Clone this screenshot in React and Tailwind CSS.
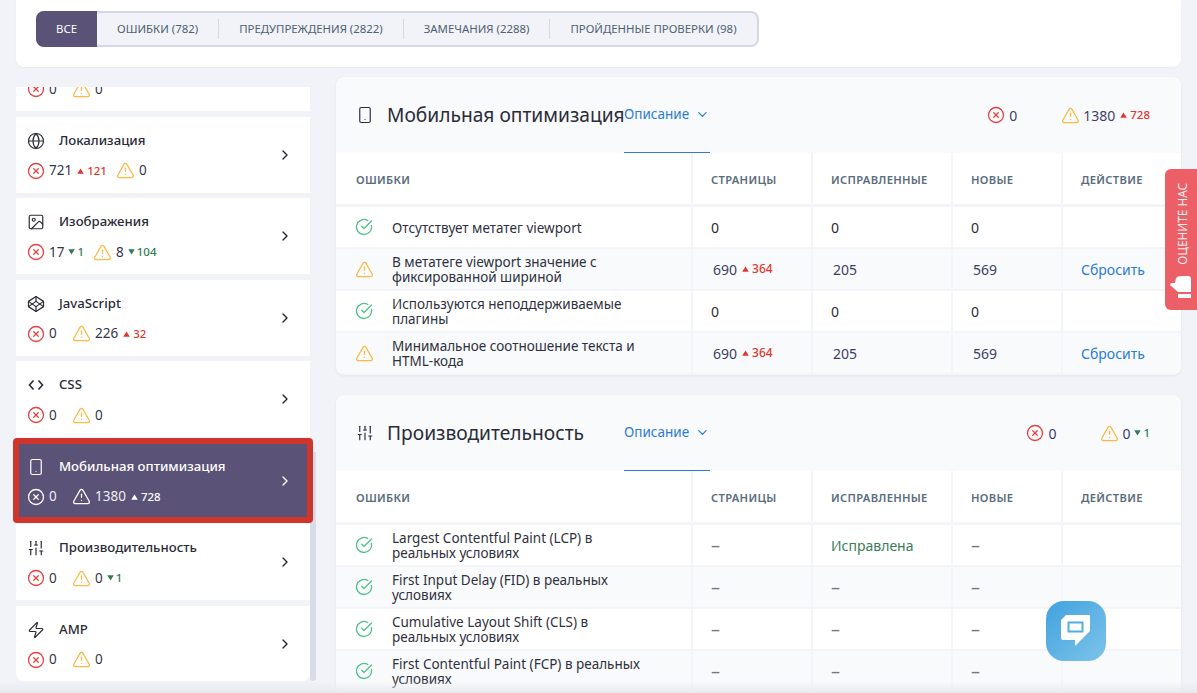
import React from 'react'
import {
  ChevronDown, ChevronRight, CircleCheckBig, CircleX, Codepen, Globe, Image,
  SlidersVertical, Smartphone, TriangleAlert, Zap
} from 'lucide-react'

const tabs = ['Ошибки (782)', 'Предупреждения (2822)', 'Замечания (2288)', 'Пройденные проверки (98)']

function CodeIcon({ className }) {
  return (
    <svg viewBox="0 0 18 18" className={`fill-none stroke-current stroke-[1.6] ${className}`}>
      <path d="M6.5 4.5 2.5 9l4 4.5M11.5 4.5l4 4.5-4 4.5" />
    </svg>
  )
}

const sections = [
  { title: '', icon: Globe, err: '0', warn: '0' },
  { title: 'Локализация', icon: Globe, err: '721', errUp: '121', warn: '0' },
  { title: 'Изображения', icon: Image, err: '17', errDown: '1', warn: '8', warnDown: '104' },
  { title: 'JavaScript', icon: Codepen, err: '0', warn: '226', warnUp: '32' },
  { title: 'CSS', icon: CodeIcon, err: '0', warn: '0' },
  { title: 'Мобильная оптимизация', icon: Smartphone, err: '0', warn: '1380', warnUp: '728', active: true },
  { title: 'Производительность', icon: SlidersVertical, err: '0', warn: '0', warnDown: '1' },
  { title: 'AMP', icon: Zap, err: '0', warn: '0' }
]

const mobileRows = [
  { ok: true, text: 'Отсутствует метатег viewport', pages: '0', fixed: '0', fresh: '0' },
  { text: <>В метатеге viewport значение с<br />фиксированной шириной</>, pages: '690', up: '364', fixed: '205', fresh: '569', reset: true },
  { ok: true, text: <>Используются неподдерживаемые<br />плагины</>, pages: '0', fixed: '0', fresh: '0' },
  { text: <>Минимальное соотношение текста и<br />HTML-кода</>, pages: '690', up: '364', fixed: '205', fresh: '569', reset: true }
]

const perfRows = [
  { ok: true, text: <>Largest Contentful Paint (LCP) в<br />реальных условиях</>, pages: '–', fixed: 'Исправлена', fresh: '–' },
  { ok: true, text: <>First Input Delay (FID) в реальных<br />условиях</>, pages: '–', fixed: '–', fresh: '–' },
  { ok: true, text: <>Cumulative Layout Shift (CLS) в<br />реальных условиях</>, pages: '–', fixed: '–', fresh: '–' },
  { ok: true, text: <>First Contentful Paint (FCP) в реальных<br />условиях</>, pages: '–', fixed: '–', fresh: '–' }
]

function Up({ className = '' }) {
  return (
    <svg viewBox="0 0 8 7" className={`w-[7px] h-[6px] fill-current ${className}`}>
      <path d="M4 0.5 L7.5 6 Q8 6.8 7 6.8 H1 Q0 6.8 .5 6 Z" />
    </svg>
  )
}

function Down({ className = '' }) {
  return (
    <svg viewBox="0 0 8 7" className={`w-[7px] h-[6px] fill-current ${className}`}>
      <path d="M4 6.5 L7.5 1 Q8 .2 7 .2 H1 Q0 .2 .5 1 Z" />
    </svg>
  )
}

function Delta({ up, down, white, big }) {
  const size = big ? 'text-[12px]' : 'text-[11.5px]'
  if (up) {
    return (
      <span className={`ml-[5px] flex items-center gap-[3px] ${size} font-medium ${white ? 'text-white' : 'text-[#e0362c]'}`}>
        <Up />{up}
      </span>
    )
  }
  if (down) {
    return (
      <span className={`ml-[4px] flex items-center gap-[2px] ${size} font-medium text-[#2f7d55]`}>
        <Down />{down}
      </span>
    )
  }
  return null
}

function ErrIcon({ white }) {
  return <CircleX size={18} strokeWidth={1.7} className={`-mx-px shrink-0 ${white ? 'text-white' : 'text-[#e4413f]'}`} />
}

function WarnIcon({ white, className = '' }) {
  return <TriangleAlert size={19} strokeWidth={1.6} className={`shrink-0 ${white ? 'text-white' : 'text-[#fdb943]'} ${className}`} />
}

function SideCard({ item }) {
  const Icon = item.icon
  const white = item.active
  return (
    <div className={`relative h-[76px] shrink-0 pl-3 pr-[17px] flex items-center justify-between ${white ? 'bg-[#5a5277] text-white' : 'bg-white text-[#2a2c38]'}`}>
      <div className="pt-[2px]">
        <div className="flex items-center h-5 mb-[10px]">
          {item.title && <Icon className="w-[18px] h-[18px] -mx-px" size={18} strokeWidth={1.6} />}
          <span className="ml-[15px] text-[13.2px] font-medium">{item.title}</span>
        </div>
        <div className={`flex items-center h-5 text-[13.5px] ${white ? 'text-[#eeedf3]' : 'text-[#34364a]'}`}>
          <div className="flex items-center min-w-[35px]">
            <ErrIcon white={white} />
            <span className="ml-[5px]">{item.err}</span>
            <Delta up={item.errUp} down={item.errDown} white={white} />
          </div>
          <div className="flex items-center ml-[9px]">
            <WarnIcon white={white} />
            <span className="ml-[4px]">{item.warn}</span>
            <Delta up={item.warnUp} down={item.warnDown} white={white} />
          </div>
        </div>
      </div>
      <ChevronRight size={16} strokeWidth={2} className={white ? 'text-white' : 'text-[#23252f]'} />
    </div>
  )
}

function Value({ value }) {
  if (value === '–') return <span className="text-[18px] leading-none text-[#77787f]">–</span>
  return value
}

function Row({ row, odd }) {
  const bg = odd ? 'bg-[#f9fafc]' : 'bg-white'
  const cell = `${bg} flex items-center h-10 text-[14px]`
  const num = row.up ? 'text-[#3d3f66] pl-5' : 'text-[#2a2c38] pl-[18px]'
  return (
    <div className="grid grid-cols-[355px_118px_138px_108px_118px] gap-x-[2px]">
      <div className={`${bg} pl-5 flex items-center h-10`}>
        <span className="w-4 flex justify-center shrink-0">
          {row.ok
            ? <CircleCheckBig size={18} strokeWidth={1.7} className="text-[#51bf88] shrink-0" />
            : <WarnIcon />}
        </span>
        <span className="ml-[20px] pt-[2px] text-[13.5px] leading-[15px] text-[#2f3140]">{row.text}</span>
      </div>
      <div className={`${cell} ${num}`}>
        <Value value={row.pages} />
        {row.up && <Delta up={row.up} big />}
      </div>
      <div className={`${cell} ${row.fixed === 'Исправлена' ? 'text-[#3b7d59] text-[13.5px] pl-[18px]' : num}`}><Value value={row.fixed} /></div>
      <div className={`${cell} ${num}`}><Value value={row.fresh} /></div>
      <div className={`${cell} pl-[18px] text-[#2b7cd3]`}>{row.reset ? 'Сбросить' : ''}</div>
    </div>
  )
}

function Panel({ title, icon: Icon, stats, rows }) {
  return (
    <div className="rounded-lg pb-[2px] shadow-[0_1px_3px_rgba(60,70,110,0.08)] overflow-hidden bg-[#f4f5f9]">
      <div className="h-[76px] bg-[#f9fafc] flex items-stretch pl-5 pr-[31px]">
        <div className="flex items-center w-[268px] shrink-0">
          <Icon size={18} strokeWidth={1.6} className="text-[#2d2f4a] shrink-0" />
          <span className="ml-[13px] text-[19.2px] text-[#2a2c38] whitespace-nowrap">{title}</span>
        </div>
        <div className="w-[86px] border-b border-[#2b7cd3] flex items-center text-[13.5px] text-[#2b7cd3]">
          Описание
          <ChevronDown size={15} strokeWidth={2} className="ml-[6px]" />
        </div>
        {stats}
      </div>
      <div className="grid grid-cols-[355px_118px_138px_108px_118px] gap-x-[2px] mb-[3px] text-[11.2px] font-semibold tracking-[0.3px] uppercase text-[#5a6d7c]">
        {['Ошибки', 'Страницы', 'Исправленные', 'Новые', 'Действие'].map((h, i) => (
          <div key={h} className={`bg-white h-[51px] pt-[3px] flex items-center ${i === 0 ? 'pl-5' : 'pl-[18px]'}`}>{h}</div>
        ))}
      </div>
      <div className="flex flex-col gap-y-[2px]">
        {rows.map((row, i) => <Row key={i} row={row} odd={i % 2 === 1} />)}
      </div>
    </div>
  )
}

function PanelStats({ warn, up, down }) {
  return (
    <div className="ml-auto flex items-center text-[14px] text-[#3d3f66]">
      <ErrIcon />
      <span className="ml-[5px]">0</span>
      <WarnIcon className="ml-[44px]" />
      <span className="ml-[3px]">{warn}</span>
      <Delta up={up} down={down} />
    </div>
  )
}

export default function App() {
  return (
    <div className="relative h-[693px] overflow-hidden bg-[#f1f3f8] px-4" style={{ fontFamily: '"Noto Sans", sans-serif' }}>
      {/* Tabs */}
      <div className="h-[67px] bg-white rounded-b-lg pl-5 pt-[11px] shadow-[0_1px_2px_rgba(60,70,110,0.05)]">
        <div className="inline-flex h-9 rounded-lg border-2 border-[#d5d7e6] bg-[#f1f3f8] text-[11.4px] uppercase text-[#4f6170]">
          <div className="-my-[2px] -ml-[2px] w-[61px] h-9 rounded-l-lg bg-[#5a5277] text-white flex items-center justify-center">Все</div>
          {tabs.map((t, i) => (
            <div key={t} className="flex items-center">
              <span className="px-5">{t}</span>
              {i < tabs.length - 1 && <span className="w-px h-5 bg-[#d5d7e6]" />}
            </div>
          ))}
        </div>
      </div>

      <div className="flex gap-5 mt-[10px]">
        {/* Sidebar */}
        <div className="relative w-[300px] h-[594px] mt-[10px] flex shrink-0">
          <div className="w-[294px] h-full overflow-hidden rounded-b-lg flex flex-col gap-y-[5.5px]">
            <div className="-mt-[52px] flex flex-col gap-y-[5.5px]">
              {sections.map((s, i) => <SideCard key={i} item={s} />)}
            </div>
          </div>
          <div className="w-[6px] h-full pt-[365px]">
            <div className="h-full rounded-b bg-[#d8dbe8]" />
          </div>
          <div className="absolute top-[351px] -left-[3px] w-[300px] h-[85px] rounded border-[6px] border-[#d0352c]" />
        </div>

        {/* Main */}
        <div className="w-[845px] flex flex-col gap-5 shrink-0">
          <Panel title="Мобильная оптимизация" icon={Smartphone} rows={mobileRows} stats={<PanelStats warn="1380" up="728" />} />
          <Panel title="Производительность" icon={SlidersVertical} rows={perfRows} stats={<PanelStats warn="0" down="1" />} />
        </div>
      </div>

      {/* Feedback tab */}
      <div className="absolute right-0 top-[169px] w-8 h-[141px] rounded-l-md bg-[#ec5f67] flex flex-col items-center pt-[14px] text-white">
        <span className="ml-[3px] text-[11.8px] leading-none uppercase text-white/90 [writing-mode:vertical-rl] rotate-180 whitespace-nowrap">Оцените нас</span>
        <svg viewBox="0 0 22 24" className="w-[22px] h-6 mt-[10px] fill-white">
          <path d="M6 3 Q8 1 11 1 H18 Q21 1 21 4 V17 H8 L0 10 Q0 8 2 8 H5 Z" />
          <rect x="8" y="19" width="13" height="4" />
        </svg>
      </div>

      {/* Chat button */}
      <div className="absolute left-[1046px] top-[601px] w-[60px] h-[60px] rounded-[18px] bg-gradient-to-br from-[#3fa2de] to-[#7cc4ea] flex items-center justify-center">
        <svg viewBox="0 0 30 32" className="w-[30px] h-8">
          <path d="M5 0 H29 V16 L14 31 V25 H2 Q0 25 0 23 V5 Z" fill="#fff" />
          <rect x="7.5" y="7.5" width="14" height="9" fill="none" stroke="#55ade2" strokeWidth="2" />
        </svg>
      </div>

      <div className="absolute inset-x-0 bottom-0 h-[12px] bg-gradient-to-b from-transparent to-[#e9eaee] pointer-events-none" />
    </div>
  )
}
